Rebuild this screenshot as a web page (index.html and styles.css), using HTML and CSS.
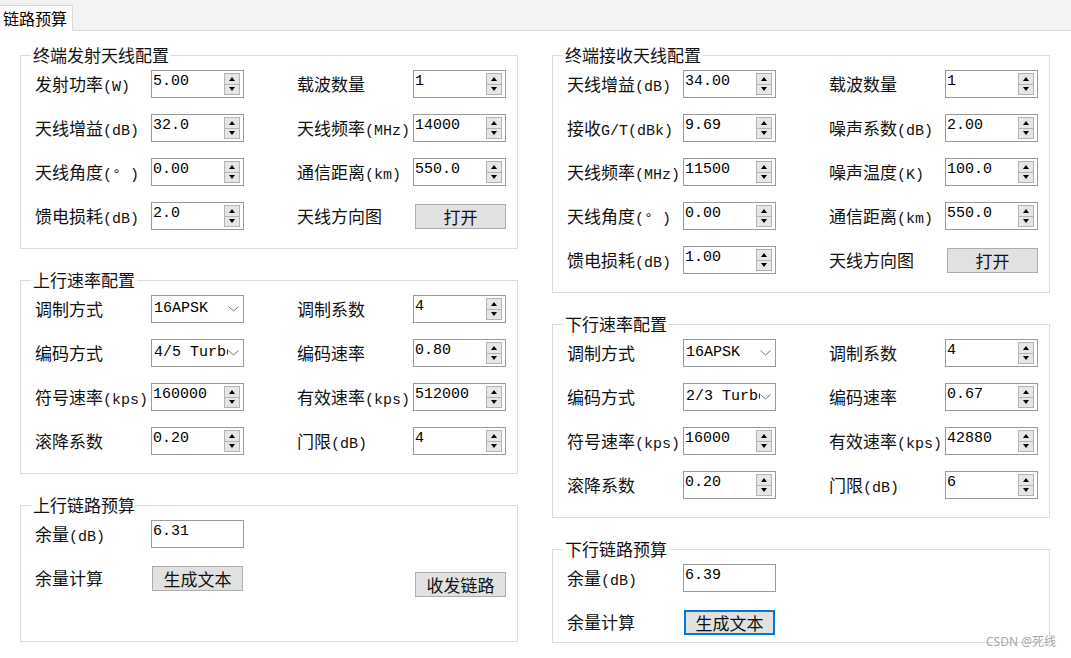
FILE: index.html
```html
<!DOCTYPE html>
<html lang="zh">
<head>
<meta charset="utf-8">
<title>链路预算</title>
<link rel="stylesheet" href="styles.css">
</head>
<body>
<div class="tabbar"><div class="tab">链路预算</div></div>
<div class="page">
  <div class="col">
    <fieldset class="group">
      <legend>终端发射天线配置</legend>
      <div class="grid">
        <div class="lbl">发射功率<span class="u">(W)</span></div>
        <div class="box"><span class="val">5.00</span><span class="spin"><i></i><i></i></span></div>
        <div class="lbl">载波数量</div>
        <div class="box"><span class="val">1</span><span class="spin"><i></i><i></i></span></div>

        <div class="lbl">天线增益<span class="u">(dB)</span></div>
        <div class="box"><span class="val">32.0</span><span class="spin"><i></i><i></i></span></div>
        <div class="lbl">天线频率<span class="u">(MHz)</span></div>
        <div class="box"><span class="val">14000</span><span class="spin"><i></i><i></i></span></div>

        <div class="lbl">天线角度<span class="u">(° )</span></div>
        <div class="box"><span class="val">0.00</span><span class="spin"><i></i><i></i></span></div>
        <div class="lbl">通信距离<span class="u">(km)</span></div>
        <div class="box"><span class="val">550.0</span><span class="spin"><i></i><i></i></span></div>

        <div class="lbl">馈电损耗<span class="u">(dB)</span></div>
        <div class="box"><span class="val">2.0</span><span class="spin"><i></i><i></i></span></div>
        <div class="lbl">天线方向图</div>
        <div class="cell"><button class="btn">打开</button></div>
      </div>
    </fieldset>

    <fieldset class="group">
      <legend>上行速率配置</legend>
      <div class="grid">
        <div class="lbl">调制方式</div>
        <div class="box combo"><span class="val">16APSK</span><svg class="chev" width="11" height="6" viewBox="0 0 11 6"><polyline points="0.5,0.5 5.5,5 10.5,0.5" fill="none" stroke="#6e6e6e" stroke-width="1"/></svg></div>
        <div class="lbl">调制系数</div>
        <div class="box"><span class="val">4</span><span class="spin"><i></i><i></i></span></div>

        <div class="lbl">编码方式</div>
        <div class="box combo"><span class="val">4/5 Turbo</span><svg class="chev" width="11" height="6" viewBox="0 0 11 6"><polyline points="0.5,0.5 5.5,5 10.5,0.5" fill="none" stroke="#6e6e6e" stroke-width="1"/></svg></div>
        <div class="lbl">编码速率</div>
        <div class="box"><span class="val">0.80</span><span class="spin"><i></i><i></i></span></div>

        <div class="lbl">符号速率<span class="u">(kps)</span></div>
        <div class="box"><span class="val">160000</span><span class="spin"><i></i><i></i></span></div>
        <div class="lbl">有效速率<span class="u">(kps)</span></div>
        <div class="box"><span class="val">512000</span><span class="spin"><i></i><i></i></span></div>

        <div class="lbl">滚降系数</div>
        <div class="box"><span class="val">0.20</span><span class="spin"><i></i><i></i></span></div>
        <div class="lbl">门限<span class="u">(dB)</span></div>
        <div class="box"><span class="val">4</span><span class="spin"><i></i><i></i></span></div>
      </div>
    </fieldset>

    <fieldset class="group">
      <legend>上行链路预算</legend>
      <div class="grid grid-up">
        <div class="lbl">余量<span class="u">(dB)</span></div>
        <div class="box"><span class="val">6.31</span></div>
        <div class="lbl"></div>
        <div class="cell"></div>

        <div class="lbl">余量计算</div>
        <div class="cell"><button class="btn btn-gen">生成文本</button></div>
        <div class="lbl"></div>
        <div class="cell low"><button class="btn">收发链路</button></div>
      </div>
    </fieldset>
  </div>

  <div class="col">
    <fieldset class="group">
      <legend>终端接收天线配置</legend>
      <div class="grid">
        <div class="lbl">天线增益<span class="u">(dB)</span></div>
        <div class="box"><span class="val">34.00</span><span class="spin"><i></i><i></i></span></div>
        <div class="lbl">载波数量</div>
        <div class="box"><span class="val">1</span><span class="spin"><i></i><i></i></span></div>

        <div class="lbl">接收<span class="u">G/T(dBk)</span></div>
        <div class="box"><span class="val">9.69</span><span class="spin"><i></i><i></i></span></div>
        <div class="lbl">噪声系数<span class="u">(dB)</span></div>
        <div class="box"><span class="val">2.00</span><span class="spin"><i></i><i></i></span></div>

        <div class="lbl">天线频率<span class="u">(MHz)</span></div>
        <div class="box"><span class="val">11500</span><span class="spin"><i></i><i></i></span></div>
        <div class="lbl">噪声温度<span class="u">(K)</span></div>
        <div class="box"><span class="val">100.0</span><span class="spin"><i></i><i></i></span></div>

        <div class="lbl">天线角度<span class="u">(° )</span></div>
        <div class="box"><span class="val">0.00</span><span class="spin"><i></i><i></i></span></div>
        <div class="lbl">通信距离<span class="u">(km)</span></div>
        <div class="box"><span class="val">550.0</span><span class="spin"><i></i><i></i></span></div>

        <div class="lbl">馈电损耗<span class="u">(dB)</span></div>
        <div class="box"><span class="val">1.00</span><span class="spin"><i></i><i></i></span></div>
        <div class="lbl">天线方向图</div>
        <div class="cell"><button class="btn">打开</button></div>
      </div>
    </fieldset>

    <fieldset class="group">
      <legend>下行速率配置</legend>
      <div class="grid">
        <div class="lbl">调制方式</div>
        <div class="box combo"><span class="val">16APSK</span><svg class="chev" width="11" height="6" viewBox="0 0 11 6"><polyline points="0.5,0.5 5.5,5 10.5,0.5" fill="none" stroke="#6e6e6e" stroke-width="1"/></svg></div>
        <div class="lbl">调制系数</div>
        <div class="box"><span class="val">4</span><span class="spin"><i></i><i></i></span></div>

        <div class="lbl">编码方式</div>
        <div class="box combo"><span class="val">2/3 Turbo</span><svg class="chev" width="11" height="6" viewBox="0 0 11 6"><polyline points="0.5,0.5 5.5,5 10.5,0.5" fill="none" stroke="#6e6e6e" stroke-width="1"/></svg></div>
        <div class="lbl">编码速率</div>
        <div class="box"><span class="val">0.67</span><span class="spin"><i></i><i></i></span></div>

        <div class="lbl">符号速率<span class="u">(kps)</span></div>
        <div class="box"><span class="val">16000</span><span class="spin"><i></i><i></i></span></div>
        <div class="lbl">有效速率<span class="u">(kps)</span></div>
        <div class="box"><span class="val">42880</span><span class="spin"><i></i><i></i></span></div>

        <div class="lbl">滚降系数</div>
        <div class="box"><span class="val">0.20</span><span class="spin"><i></i><i></i></span></div>
        <div class="lbl">门限<span class="u">(dB)</span></div>
        <div class="box"><span class="val">6</span><span class="spin"><i></i><i></i></span></div>
      </div>
    </fieldset>

    <fieldset class="group">
      <legend>下行链路预算</legend>
      <div class="grid grid-down">
        <div class="lbl">余量<span class="u">(dB)</span></div>
        <div class="box"><span class="val">6.39</span></div>
        <div class="lbl"></div>
        <div class="cell"></div>

        <div class="lbl">余量计算</div>
        <div class="cell"><button class="btn btn-gen focus">生成文本</button></div>
        <div class="lbl"></div>
        <div class="cell"></div>
      </div>
    </fieldset>
  </div>
</div>
<div class="watermark">CSDN @死线</div>
</body>
</html>
```

FILE: styles.css
```css
html, body {
  margin: 0;
  padding: 0;
  background: #ffffff;
}

body {
  width: 1071px;
  height: 658px;
  overflow: hidden;
  position: relative;
  font-family: "Noto Sans CJK SC", "Noto Sans", sans-serif;
  color: #000;
}

.tabbar {
  height: 30px;
  background: #f3f3f3;
  border-bottom: 1px solid #d9d9d9;
  display: flex;
  align-items: flex-end;
}

.tab {
  height: 26px;
  width: 73px;
  box-sizing: border-box;
  background: #ffffff;
  border-top: 1px solid #d9d9d9;
  border-right: 1px solid #d9d9d9;
  margin-bottom: -1px;
  padding-left: 3px;
  font-size: 16px;
  line-height: 25px;
}

.page {
  display: flex;
  gap: 34px;
  padding: 14px 0 0 20px;
}

.col {
  display: flex;
  flex-direction: column;
  gap: 21px;
  width: 498px;
}

.group {
  margin: 0;
  padding: 0;
  min-width: 0;
  width: 498px;
  box-sizing: border-box;
  border: 1px solid #dcdcdc;
}

.group legend {
  margin-left: 10px;
  padding: 0 2px;
  font-size: 17px;
  line-height: 20px;
  color: #111;
}

.grid {
  display: grid;
  grid-template-columns: 116px 146px 116px 93px;
  grid-auto-rows: 28px;
  row-gap: 16px;
  padding: 5px 11px 18px 14px;
}

.grid-up {
  padding-bottom: 49px;
}

.grid-down {
  padding-bottom: 6px;
}

.lbl {
  font-size: 17px;
  line-height: 28px;
  white-space: nowrap;
  color: #111;
}

.u {
  font-family: "Liberation Mono", monospace;
  font-size: 15px;
}

.box {
  width: 93px;
  height: 28px;
  box-sizing: border-box;
  border: 1px solid #9a9a9a;
  background: #fff;
  display: flex;
  align-items: flex-start;
}

.val {
  flex: 1;
  min-width: 0;
  overflow: hidden;
  white-space: nowrap;
  font-family: "Liberation Mono", monospace;
  font-size: 15px;
  line-height: 18px;
  padding: 2px 0 0 1px;
}

.spin {
  width: 16px;
  height: 22px;
  margin: 2px 3px 0 0;
  box-sizing: border-box;
  border: 1px solid #b4b4b4;
  background: #e6e6e6;
  display: flex;
  flex-direction: column;
}

.spin i {
  flex: 1;
  display: flex;
  align-items: center;
  justify-content: center;
}

.spin i:first-child {
  border-bottom: 1px solid #b4b4b4;
}

.spin i:first-child::before {
  content: "";
  border-left: 3.5px solid transparent;
  border-right: 3.5px solid transparent;
  border-bottom: 4px solid #000;
}

.spin i:last-child::before {
  content: "";
  border-left: 3.5px solid transparent;
  border-right: 3.5px solid transparent;
  border-top: 4px solid #000;
}

.combo {
  align-items: center;
}

.combo .val {
  padding: 0 4px 0 2px;
  line-height: 24px;
}

.chev {
  margin-right: 4px;
  flex: none;
}

.cell {
  display: flex;
  align-items: center;
}

.low {
  align-items: flex-end;
}

.low .btn {
  margin-bottom: -5px;
}

.btn {
  width: 91px;
  height: 25px;
  margin-left: 2px;
  box-sizing: border-box;
  border: 1px solid #adadad;
  background: #e1e1e1;
  font-family: "Noto Sans CJK SC", sans-serif;
  font-size: 17px;
  line-height: 21px;
  padding: 0;
  color: #111;
}

.btn-gen {
  margin-left: 1px;
}

.focus {
  border: 2px solid #0078d7;
}

.watermark {
  position: absolute;
  right: 15px;
  top: 634px;
  font-family: "Noto Sans", "Noto Sans CJK SC", sans-serif;
  font-size: 12px;
  line-height: 16px;
  color: #a8a8a8;
}
```
